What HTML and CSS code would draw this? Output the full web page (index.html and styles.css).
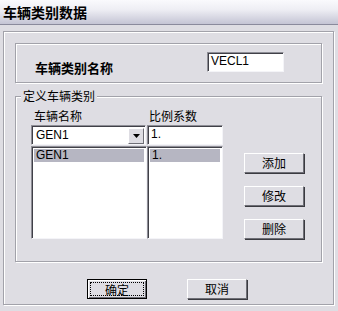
FILE: index.html
```html
<!DOCTYPE html>
<html>
<head>
<meta charset="utf-8">
<link rel="stylesheet" href="styles.css">
</head>
<body>
<div class="title">车辆类别数据</div>
<div class="frame">
  <div class="group name-group">
    <span class="name-label">车辆类别名称</span>
    <div class="input name-input">VECL1</div>
  </div>
  <div class="group def-group">
    <span class="legend">定义车辆类别</span>
    <div class="def-body">
      <div class="col col-name">
        <div class="col-head">车辆名称</div>
        <div class="combo">
          <span class="combo-text">GEN1</span>
          <span class="combo-btn"><svg width="7" height="4" viewBox="0 0 7 4"><polygon points="0,0 7,0 3.5,4" fill="#000"/></svg></span>
        </div>
        <div class="list">
          <div class="row sel">GEN1</div>
        </div>
      </div>
      <div class="col col-factor">
        <div class="col-head">比例系数</div>
        <div class="input factor-input">1.</div>
        <div class="list">
          <div class="row sel">1.</div>
        </div>
      </div>
      <div class="actions">
        <button class="btn">添加</button>
        <button class="btn">修改</button>
        <button class="btn">删除</button>
      </div>
    </div>
  </div>
  <div class="footer">
    <button class="btn default"><span class="focus">确定</span></button>
    <button class="btn">取消</button>
  </div>
</div>
</body>
</html>
```
FILE: styles.css
```css
* { box-sizing: border-box; }
html, body {
  margin: 0;
  padding: 0;
  width: 338px;
  height: 311px;
  overflow: hidden;
  background: #dedde3;
  font-family: "Noto Sans CJK SC", "Liberation Sans", sans-serif;
  font-size: 12px;
  color: #000;
}
.title {
  height: 25px;
  padding: 2px 0 0 3px;
  font-size: 14px;
  font-weight: bold;
  line-height: 20px;
  background: linear-gradient(#fafafd 0%, #eeeef4 40%, #c4c4d4 100%);
  border-bottom: 1px solid #8a8a9c;
}
.frame {
  margin: 6px 4px 0 3px;
  height: 274px;
  border: 1px solid #a2a2aa;
  box-shadow: inset 1px 1px 0 #fff, 1px 1px 0 #fff;
  padding: 11px 11px 0 11px;
  display: flex;
  flex-direction: column;
}
.group {
  border: 1px solid #a2a2aa;
  box-shadow: inset 1px 1px 0 #fff, 1px 1px 0 #fff;
  position: relative;
}
.name-group {
  height: 40px;
  display: flex;
  align-items: center;
  padding: 0 37px 0 19px;
  justify-content: space-between;
}
.name-label {
  font-size: 13px;
  font-weight: bold;
  margin-top: 8px;
}
.input {
  background: #fff;
  border: 1px solid;
  border-color: #8e8e96 #f4f4f8 #f4f4f8 #8e8e96;
  box-shadow: inset 1px 1px 0 #404048;
  font-family: "Liberation Sans", sans-serif;
  font-size: 12px;
  line-height: 17px;
  padding-left: 3px;
}
.name-input {
  width: 77px;
  height: 20px;
  margin-top: -3px;
}
.def-group {
  margin-top: 13px;
  height: 166px;
}
.legend {
  position: absolute;
  left: 5px;
  top: -9px;
  padding: 0 2px;
  background: #dedde3;
  line-height: 16px;
}
.def-body {
  display: flex;
  padding: 10px 0 0 15px;
}
.col { display: flex; flex-direction: column; }
.col-name { width: 116px; }
.col-factor { width: 76px; }
.col-head {
  height: 17px;
  line-height: 17px;
  padding-left: 3px;
  margin-bottom: 1px;
}
.col-factor .col-head { padding-left: 2px; }
.combo {
  height: 20px;
  background: #fff;
  border: 1px solid;
  border-color: #8e8e96 #f4f4f8 #f4f4f8 #8e8e96;
  box-shadow: inset 1px 1px 0 #404048;
  display: flex;
  align-items: center;
  justify-content: space-between;
  margin-right: 1px;
}
.combo-text {
  font-family: "Liberation Sans", sans-serif;
  padding-left: 4px;
  line-height: 17px;
}
.combo-btn {
  width: 16px;
  height: 16px;
  margin: 1px 1px 0 0;
  background: #dedde3;
  border: 1px solid;
  border-color: #fff #6e6e76 #6e6e76 #fff;
  display: flex;
  align-items: center;
  justify-content: center;
}
.factor-input { height: 20px; }
.list {
  margin-top: 1px;
  height: 93px;
  background: #fff;
  border: 1px solid;
  border-color: #8e8e96 #f4f4f8 #f4f4f8 #8e8e96;
  box-shadow: inset 1px 1px 0 #404048;
  padding: 2px 2px 0 2px;
}
.col-name .list { margin-right: 0; }
.row {
  font-family: "Liberation Sans", sans-serif;
  height: 13px;
  line-height: 13px;
  padding-left: 2px;
}
.row.sel { background: #b6b6c2; }
.actions {
  display: flex;
  flex-direction: column;
  gap: 13px;
  margin: 46px 0 0 21px;
}
.btn {
  width: 60px;
  height: 20px;
  padding: 0;
  font-family: "Noto Sans CJK SC", sans-serif;
  font-size: 12px;
  line-height: 16px;
  color: #000;
  background: #dedde3;
  border: 1px solid;
  border-color: #fff #6e6e76 #6e6e76 #fff;
  box-shadow: 1px 1px 0 #3a3a40;
}
.footer {
  display: flex;
  gap: 40px;
  margin: 17px 0 0 72px;
}
.btn.default {
  border: 1px solid #000;
  box-shadow: inset 1px 1px 0 #fff, inset -1px -1px 0 #6e6e76;
  padding: 2px;
}
.focus {
  display: block;
  height: 14px;
  line-height: 13px;
  border: 1px dotted #000;
}
```
